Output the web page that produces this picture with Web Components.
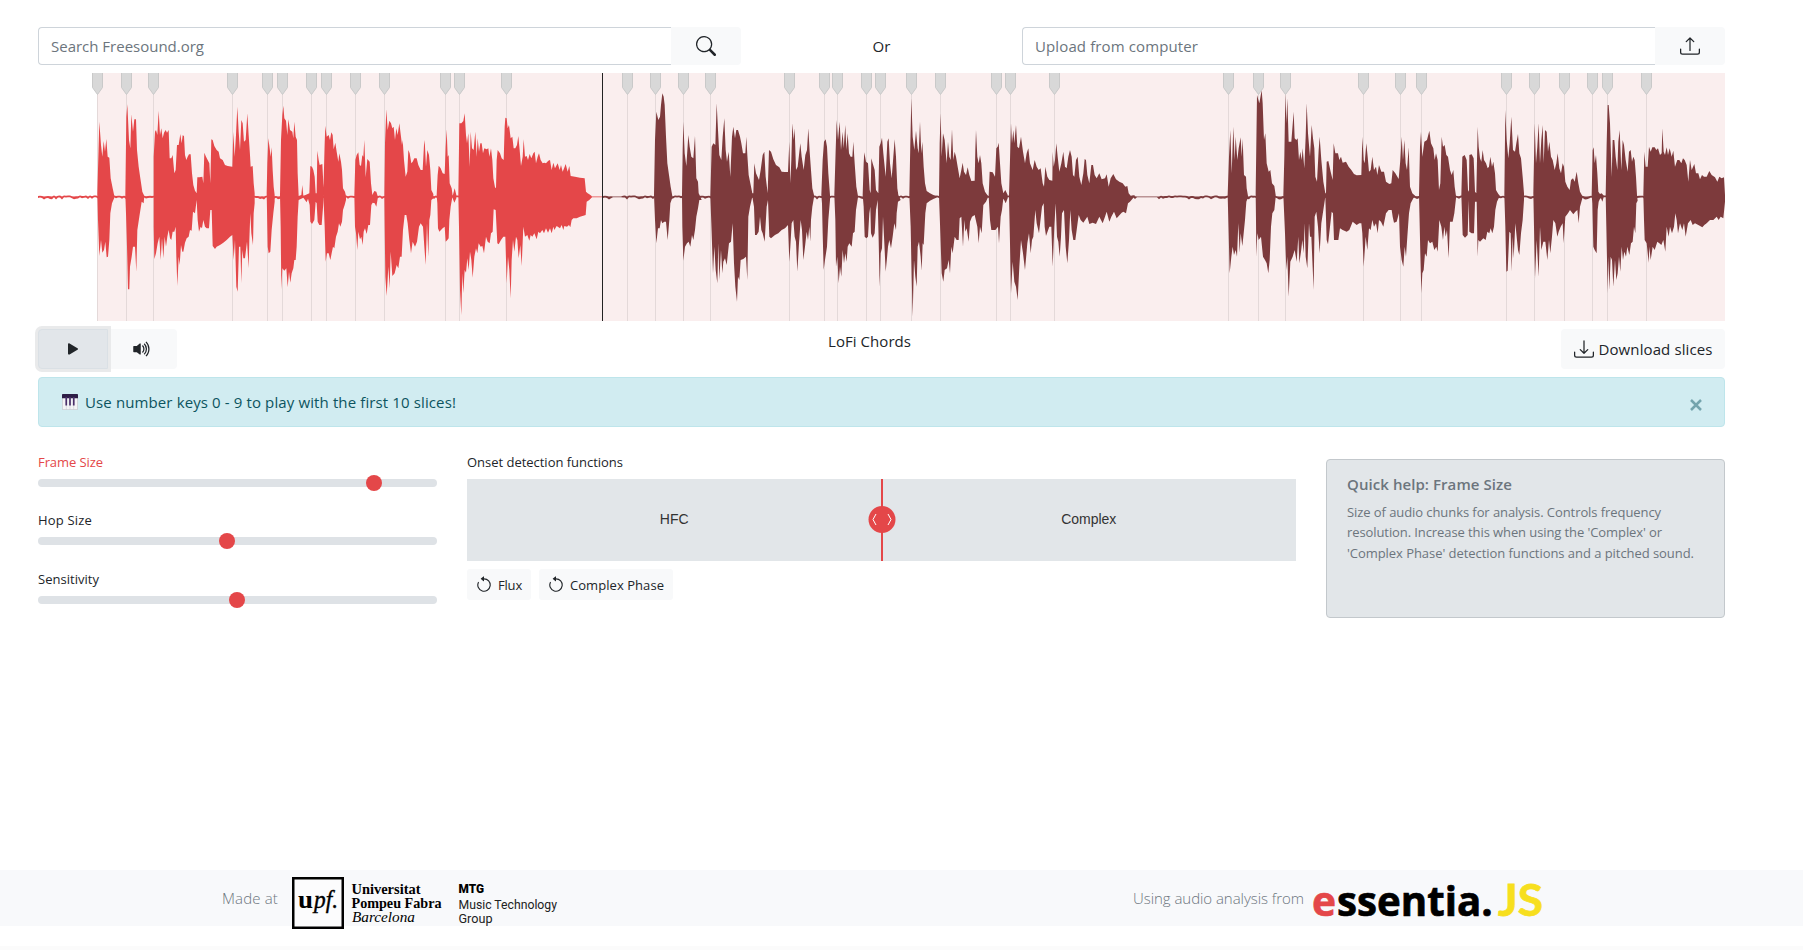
<!DOCTYPE html>
<html lang="en">
<head>
<meta charset="utf-8">
<title>LoFi Chords</title>
<style>
html,body{margin:0;height:100%;background:#fff;overflow:hidden}
body{font:15px/24px "Open Sans","Noto Sans",sans-serif;color:#212529}
</style>
</head>
<body>
<slicer-app></slicer-app>
<script>
const define = (name, html, setup) => customElements.define(name, class extends HTMLElement {
  connectedCallback() {
    if (this.shadowRoot) return;
    const root = this.attachShadow({mode: 'open'});
    const t = document.createElement('template');
    t.innerHTML = typeof html === 'function' ? html(this) : html;
    root.append(t.content.cloneNode(true));
    if (setup) setup(this, root);
  }
});

/* Text run tracked to a given width */
define('fit-text', '<style>:host{display:inline-block;white-space:nowrap}span{display:inline-block}</style><span><slot></slot></span>', (el, root) => {
  const s = root.querySelector('span'), w = +el.getAttribute('w');
  const n = el.textContent.length, nat = s.getBoundingClientRect().width;
  if (w && n) s.style.letterSpacing = ((w - nat) / n).toFixed(3) + 'px';
});

const ICONS = {
  search: '<path d="M11.742 10.344a6.5 6.5 0 1 0-1.397 1.398h-.001c.03.04.062.078.098.115l3.85 3.85a1 1 0 0 0 1.415-1.414l-3.85-3.85a1.007 1.007 0 0 0-.115-.1zM12 6.5a5.5 5.5 0 1 1-11 0 5.5 5.5 0 0 1 11 0z"/>',
  upload: '<path d="M.5 9.9a.5.5 0 0 1 .5.5v2.5a1 1 0 0 0 1 1h12a1 1 0 0 0 1-1v-2.5a.5.5 0 0 1 1 0v2.5a2 2 0 0 1-2 2H2a2 2 0 0 1-2-2v-2.5a.5.5 0 0 1 .5-.5z"/><path d="M7.646 1.146a.5.5 0 0 1 .708 0l3 3a.5.5 0 0 1-.708.708L8.5 2.707V11.5a.5.5 0 0 1-1 0V2.707L5.354 4.854a.5.5 0 1 1-.708-.708l3-3z"/>',
  download: '<path d="M.5 9.9a.5.5 0 0 1 .5.5v2.5a1 1 0 0 0 1 1h12a1 1 0 0 0 1-1v-2.5a.5.5 0 0 1 1 0v2.5a2 2 0 0 1-2 2H2a2 2 0 0 1-2-2v-2.5a.5.5 0 0 1 .5-.5z"/><path d="M7.646 11.854a.5.5 0 0 0 .708 0l3-3a.5.5 0 0 0-.708-.708L8.5 10.293V1.5a.5.5 0 0 0-1 0v8.793L5.354 8.146a.5.5 0 1 0-.708.708l3 3z"/>',
  play: '<path d="M11.596 8.697l-6.363 3.692c-.54.313-1.233-.066-1.233-.697V4.308c0-.63.692-1.01 1.233-.696l6.363 3.692a.802.802 0 0 1 0 1.393z"/>',
  volume: '<path d="M11.536 14.01A8.473 8.473 0 0 0 14.026 8a8.473 8.473 0 0 0-2.49-6.01l-.708.707A7.476 7.476 0 0 1 13.025 8c0 2.071-.84 3.946-2.197 5.303l.708.707z"/><path d="M10.121 12.596A6.48 6.48 0 0 0 12.025 8a6.48 6.48 0 0 0-1.904-4.596l-.707.707A5.483 5.483 0 0 1 11.025 8a5.483 5.483 0 0 1-1.61 3.89l.706.706z"/><path d="M8.707 11.182A4.486 4.486 0 0 0 10.025 8a4.486 4.486 0 0 0-1.318-3.182L8 5.525A3.489 3.489 0 0 1 9.025 8 3.49 3.49 0 0 1 8 10.475l.707.707zM6.717 3.55A.5.5 0 0 1 7 4v8a.5.5 0 0 1-.812.39L3.825 10.5H1.5A.5.5 0 0 1 1 10V6a.5.5 0 0 1 .5-.5h2.325l2.363-1.89a.5.5 0 0 1 .529-.06z"/>',
  reset: '<path fill-rule="evenodd" d="M8 3a5 5 0 1 1-4.546 2.914.5.5 0 0 0-.908-.417A6 6 0 1 0 8 2v1z"/><path d="M8 4.466V.534a.25.25 0 0 0-.41-.192L5.23 2.308a.25.25 0 0 0 0 .384l2.36 1.966A.25.25 0 0 0 8 4.466z"/>',
  piano: '<rect x="0" y="0" width="16" height="16" rx=".8" fill="#c9ccd2"/><path d="M.8 4h3.100v11.200H.8zM4.500 4h3.200v11.200H4.500zM8.300 4h3.200v11.200H8.300zM12.100 4h3.100v11.200H12.100z" fill="#f3f3f5"/><path d="M0 .8Q0 0 .8 0h14.400q.8 0 .8.8V4.200H0z" fill="#2d1d46"/><path d="M3.400 3h1.700v8.500H3.400zM7.150 3h1.700v8.500H7.150zM10.900 3h1.700v8.500H10.900z" fill="#4a2f6a"/>'
};
define('bi-icon', el => `<style>:host{display:inline-flex;flex:none}svg{display:block}</style>
<svg width="${el.getAttribute('size')}" height="${el.getAttribute('size')}" viewBox="0 0 16 16" fill="currentColor">${ICONS[el.getAttribute('name')]}</svg>`);

define('input-group', `<style>
:host{display:flex;height:38px;flex:none}
.f{flex:1;box-sizing:border-box;border:1px solid #ced4da;border-right:0;border-radius:4px 0 0 4px;color:#6c757d;padding:6px 12px;line-height:26px;display:flex;align-items:center}
.b{width:70px;background:#f8f9fa;border-radius:0 4px 4px 0;display:flex;align-items:center;justify-content:center}
</style><div class="f"><slot></slot></div><div class="b"><slot name="icon"></slot></div>`);

/* Envelopes: origin x, then "upper outline / lower outline" per sound, three units to a pixel */
const WAVE = [
[30,'#e44749',[
'202,400 205,290 208,185 213,255 217,290 221,243 225,275 229,237 233,290 238,293 242,355 248,385 253,408/253,413 246,430 241,460 238,540 234,590 230,592 226,545 222,570 217,578 213,540 208,588 204,480',
'286,405 289,170 292,133 297,240 301,265 304,163 309,215 313,178 318,178 321,270 326,320 331,355 337,395 343,408/341,430 335,425 328,470 322,510 319,635 315,560 309,560 305,590 300,620 298,688 294,688 291,560 288,460',
'371,290 375,215 378,210 382,225 386,152 390,225 394,205 398,235 402,218 407,210 411,218 416,210 419,295 424,295 428,285 433,340 437,330 441,255 446,255 451,222 455,250 458,226 462,228 465,285 469,300 473,290 477,283 482,283 486,340 490,375 495,392 500,400 502,352 508,352 517,350 520,370 523,278 528,290 533,300 538,310 541,370 544,238 548,240 553,258 560,270 566,275 570,295 578,300 585,315 593,318 607,320 610,215 614,290 618,225 622,140 626,215 630,270 634,180 638,190 642,245 647,240 652,160 656,225 660,285 662,320 668,318 671,370 674,400/674,430 671,460 669,555 664,520 661,460 658,540 656,625 651,545 645,595 640,595 637,570 634,670 631,560 627,560 623,695 619,680 615,540 611,600 607,525 600,530 590,540 580,548 570,555 560,560 555,567 548,558 545,450 541,450 537,505 530,505 525,500 520,480 516,505 512,500 507,515 503,480 500,420 495,460 489,455 485,512 480,510 476,530 470,535 465,548 460,575 457,575 453,555 449,615 446,590 442,678 439,590 437,500 433,515 428,515 424,540 420,535 416,510 412,530 408,560 404,530 400,595 396,535 392,600 388,530 383,550 378,580 373,597 371,500',
'710,400 712,310 715,235 719,265 722,290 725,262 728,330 731,380 734,405/734,425 730,460 725,510 721,575 716,580 713,560 711,450',
'750,405 753,240 757,165 760,137 763,175 768,182 772,225 775,178 780,210 787,215 790,235 793,185 797,230 801,240 803,340 806,408 814,405 817,375 820,408 838,400 841,318 846,320 850,330 854,350 857,400 860,400 862,272 866,300 869,315 877,312 880,370 883,390/880,430 875,495 868,495 863,485 860,430 857,425 853,480 846,492 841,485 839,435 834,416 830,427 820,413 806,420 803,470 800,560 797,600 793,600 790,625 785,640 781,668 777,635 773,682 769,625 763,632 757,625 754,688 752,500']],
[320,'#e44749',[
'10,400 14,250 16,197 20,230 26,225 30,240 34,217 38,225 41,268 46,248 50,275 55,305 58,280 63,305 66,330 69,385 75,395 78,408/78,420 74,435 69,450 66,485 61,500 57,490 53,515 48,530 43,565 39,560 35,580 31,600 26,580 21,580 17,605 14,500',
'103,405 106,300 110,285 115,277 119,315 123,318 127,285 130,290 133,240 137,352 142,297 149,305 153,370 157,405 163,393 169,395 172,405/174,410 169,440 164,430 158,428 154,435 150,495 145,495 140,522 135,505 131,515 128,555 124,530 120,538 115,515 112,570 108,520 105,500',
'193,410 195,250 199,148 203,210 208,182 213,190 217,205 221,200 225,240 229,205 233,225 238,190 243,230 246,255 248,240 252,300 257,350 262,335 265,270 269,280 274,310 278,305 283,295 290,295 295,315 302,330 308,330 312,255 314,240 318,320 322,270 327,285 331,330 334,390 340,402/340,415 334,420 331,465 328,480 325,590 321,490 317,615 313,560 309,500 302,490 297,500 291,545 285,560 278,545 273,580 268,540 263,490 259,465 254,465 249,510 245,590 240,590 235,625 230,615 224,640 217,648 212,575 209,685 205,620 200,708 196,650 194,500',
'350,405 353,345 356,317 362,325 368,340 374,342 377,260 380,208 383,290 386,285 389,370 395,385 398,408 404,385 409,405/409,415 403,428 397,412 392,440 388,480 386,535 382,540 377,545 374,500 368,505 358,515 354,505 352,430',
'415,405 418,190 424,190 430,183 434,160 438,225 441,250 445,220 449,320 452,215 456,265 461,270 466,215 470,290 473,235 477,275 481,250 485,250 489,280 493,265 500,268 505,265 508,290 513,265 517,300 520,355 525,382 528,385 530,300 533,270 540,280 545,295 551,300 554,200 556,173 560,175 563,205 567,195 572,235 577,230 581,265 586,265 591,255 595,228 599,270 603,318 608,290 611,238 615,290 620,288 624,300 629,282 634,295 640,280 644,275 648,310 653,290 657,280 662,300 668,310 673,308 678,310 685,302 690,300 695,330 700,308 705,325 713,310 719,330 723,315 728,335 734,320 737,312 743,335 748,318 752,348 765,350 780,353 794,355 798,395 803,400 808,403 815,408/815,412 808,420 800,425 797,465 790,467 780,470 770,475 760,475 755,480 751,502 747,495 741,500 733,498 730,510 725,495 720,505 710,498 703,510 700,500 695,520 690,505 684,518 678,505 672,520 667,510 660,520 655,515 650,538 643,520 637,530 632,525 628,542 622,525 615,530 610,500 605,618 601,555 596,595 592,540 588,530 583,575 579,540 575,600 572,715 568,630 564,590 560,670 556,530 550,530 543,540 536,553 532,550 527,450 521,448 518,515 513,520 509,550 503,545 498,530 492,580 487,558 482,560 476,550 472,580 468,565 463,590 458,653 454,600 450,575 446,630 442,595 438,638 434,630 430,700 427,640 424,765 420,690 417,500']],
[610,'#7d3a3c',[
'132,405 135,240 139,155 145,180 150,170 153,135 157,100 161,110 164,135 168,230 172,310 177,345 182,380 187,408/187,413 181,430 178,480 173,540 168,485 163,485 157,490 153,480 149,505 144,505 139,550 135,480',
'216,405 218,270 220,185 224,280 229,318 235,225 239,260 244,290 250,295 255,228 259,355 264,365 266,400 270,408/275,420 268,420 264,445 259,470 255,510 250,540 246,525 241,560 236,545 231,550 225,560 220,602 217,500',
'301,408 305,260 310,250 316,255 320,130 324,210 328,285 334,300 338,230 343,175 347,270 351,305 356,275 361,350 366,230 370,200 375,235 379,210 384,210 390,230 394,250 399,280 406,280 409,230 412,285 416,345 421,370 427,400 430,400 433,310 438,340 447,360 452,330 458,285 463,275 467,350 473,400 477,270 483,275 490,298 498,315 508,322 515,335 525,336 534,336 538,245 541,370 544,300 547,190 551,240 554,205 558,330 563,320 571,250 575,290 581,330 586,285 591,270 595,205 599,275 603,330 607,385 612,405/612,412 607,440 603,480 601,545 598,500 594,540 590,515 585,560 580,600 576,510 572,480 567,550 562,635 558,545 554,530 550,480 545,490 541,560 538,605 534,495 525,505 515,510 505,520 495,525 483,535 478,530 474,420 470,440 464,545 458,520 454,510 450,470 446,515 440,525 435,525 432,440 427,410 420,440 415,470 412,660 408,590 400,597 392,600 388,660 384,650 381,725 376,680 372,610 368,490 363,545 357,550 350,615 345,595 340,605 337,640 333,570 328,660 325,550 322,670 317,630 313,560 309,640 305,520',
'634,405 638,300 642,245 647,238 651,260 655,340 660,405/660,420 655,480 651,560 645,600 641,630 638,520 636,430',
'673,405 677,270 680,180 684,240 689,185 693,270 698,215 701,265 706,195 709,270 713,220 717,280 722,290 727,290 730,245 734,310 739,380 744,408/744,412 738,450 734,515 729,520 725,560 718,550 713,560 710,605 706,580 702,610 698,570 694,650 690,620 686,670 682,590 678,620 676,480',
'758,405 761,310 763,277 768,305 774,310 779,390 782,400 784,295 788,310 794,330 798,390 805,400 808,260 812,250 816,233 820,280 827,350 832,245 836,235 840,310 845,355 850,290 854,238 858,290 862,385 865,405/872,420 864,425 860,460 858,510 853,490 848,530 843,565 838,540 834,560 831,595 827,635 823,550 819,470 816,565 812,580 809,680 806,540 803,420 798,450 794,520 788,533 783,520 781,440 778,460 774,530 769,535 764,530 761,440']],
[890,'#7d3a3c',[
'58,405 61,250 64,115 68,230 73,270 78,212 83,265 86,280 90,185 94,280 97,245 101,320 105,370 110,393 120,400 130,405 140,408/140,412 120,422 110,430 106,460 101,555 98,550 95,632 92,590 87,545 83,560 80,680 76,650 72,600 68,770 65,650 62,500',
'147,408 149,250 152,160 155,290 159,220 164,240 170,310 174,245 178,290 182,300 186,208 190,300 194,275 198,290 203,320 209,355 214,330 218,308 222,335 228,345 233,322 238,345 244,363 254,362 256,270 258,210 262,290 266,310 270,285 274,310 278,370 285,395 294,408/294,412 288,425 280,435 275,520 270,500 266,550 262,500 254,465 246,470 240,485 236,545 230,505 226,515 223,480 219,560 214,470 209,475 206,540 200,540 194,530 188,580 184,560 180,640 176,600 171,625 164,630 160,665 155,640 151,520',
'296,408 299,335 308,337 315,350 319,265 323,260 326,248 330,310 334,370 340,400 346,390 353,405/353,415 347,430 340,415 336,450 332,470 327,550 324,500 316,510 304,510 300,480',
'357,408 360,300 363,190 366,250 370,210 373,250 378,195 382,260 387,265 393,230 399,275 405,310 410,280 415,265 420,310 428,330 434,300 440,320 446,330 452,325 458,370 462,380 466,320 472,350 478,360 487,362 488,275 491,320 495,300 499,250 503,290 508,335 514,310 520,275 525,320 530,325 535,290 540,270 545,290 549,345 553,350 558,300 563,290 568,350 574,375 580,340 584,297 588,300 592,345 598,370 604,315 609,315 614,345 620,355 628,340 635,358 645,355 650,343 656,380 662,355 670,342 678,358 688,365 698,370 706,380 712,378 716,400 722,407 735,406/730,413 720,425 714,430 708,460 700,455 695,458 680,475 672,455 664,470 658,485 650,455 645,470 638,490 628,470 618,492 608,488 598,492 592,470 580,488 572,480 566,465 560,510 556,540 550,540 545,510 541,450 537,540 532,610 527,560 522,450 516,460 513,530 509,590 505,545 501,530 497,430 493,500 488,620 484,500 478,500 468,528 464,500 461,430 456,440 447,520 440,490 436,450 430,530 426,540 422,580 417,520 412,550 405,630 399,580 393,540 388,620 383,720 378,680 373,665 368,605 363,700 360,550']],
[1180,'#7d3a3c',[
'143,405 147,290 151,210 155,340 160,200 164,300 167,230 172,300 176,265 182,232 185,290 188,237 192,345 198,350 200,385 204,408/204,412 199,425 195,480 190,530 187,558 182,520 179,578 175,490 171,590 167,570 162,585 158,560 154,590 149,640 146,520',
'227,400 231,105 238,130 245,90 248,130 252,240 256,220 260,310 266,335 271,330 276,370 283,378 287,405/287,412 283,450 277,460 273,500 269,600 265,640 260,610 255,600 249,590 243,530 236,540 232,520 229,590 228,480',
'310,405 313,290 316,100 319,190 322,115 326,245 334,245 341,155 344,235 349,240 353,235 357,300 361,275 365,300 368,265 373,325 377,230 380,130 384,220 390,290 395,195 399,235 403,265 406,350 411,365 416,270 419,230 424,300 430,365 436,400 438,400 440,305 445,303 452,335 458,360 461,250 466,280 474,280 478,300 483,290 488,308 498,305 506,320 514,330 522,342 530,346 544,345 547,230 551,300 554,310 559,250 563,290 567,335 572,330 577,290 582,330 588,320 592,345 597,315 604,335 612,335 618,365 628,372 634,370 638,330 646,340 656,357 661,300 665,230 669,300 673,240 677,310 681,330 686,262 690,380 697,400 706,408/700,415 692,430 687,460 682,530 678,590 674,560 670,620 665,600 660,560 657,460 650,485 642,488 638,470 635,450 626,450 618,460 610,500 603,485 597,480 593,520 588,490 582,500 577,480 572,510 567,505 562,570 557,530 551,620 547,520 544,490 538,490 530,495 518,485 508,510 500,515 488,510 480,505 475,540 462,540 459,460 455,455 450,500 444,553 440,540 436,410 430,450 424,490 419,580 414,500 409,455 404,470 401,690 397,600 394,530 390,530 387,490 382,625 377,590 374,490 371,580 367,540 363,575 358,610 355,530 350,605 344,570 338,590 331,605 326,710 322,590 319,630 315,520',
'717,405 720,260 723,215 727,290 733,245 741,240 748,212 753,250 760,265 764,300 768,280 773,300 777,390 781,370 785,230 789,260 794,255 799,285 804,290 810,330 815,345 820,330 824,380 828,408/828,415 823,460 818,485 810,485 806,595 801,510 797,530 793,500 789,540 784,500 778,480 773,575 769,560 763,570 757,545 750,550 744,540 740,590 735,580 731,630 727,640 724,700 721,580']],
[1450,'#7d3a3c',[
'34,405 37,290 44,285 50,300 54,390 57,395 58,285 65,283 71,295 75,395 79,400 81,300 83,200 86,260 90,295 94,305 98,270 102,300 108,310 113,325 117,320 121,290 126,320 130,305 135,340 138,390 145,402 150,408/146,415 141,425 136,450 132,500 127,520 122,505 118,520 112,515 107,540 100,535 90,545 85,540 83,590 80,425 75,425 72,520 65,520 58,515 56,420 53,525 45,533 38,525',
'163,405 166,150 170,240 175,295 179,250 184,170 189,270 195,275 199,250 204,222 208,280 213,295 218,350 222,400/222,420 218,480 213,520 208,585 204,570 200,530 196,490 191,595 188,530 185,635 182,520 178,515 173,632 169,635 166,500',
'250,400 254,190 258,310 262,260 266,190 270,310 274,240 278,195 281,310 285,210 290,215 294,275 298,245 303,290 308,300 314,330 319,310 323,280 328,325 333,340 338,310 342,320 346,365 352,380 359,390 363,360 369,355 374,365 380,335 385,370 390,395 397,408/397,415 390,440 386,490 382,450 376,455 370,463 360,450 354,460 346,470 341,550 338,490 332,500 326,515 322,530 316,490 310,480 306,530 301,580 297,540 292,600 286,545 280,545 274,570 270,500 266,650 260,540 255,655 252,500',
'425,405 428,270 431,262 434,310 438,285 442,340 445,395 450,402 455,400 462,408/457,425 452,412 446,425 443,450 440,580 434,570 430,560 427,430',
'467,405 470,250 473,135 476,135 480,190 485,350 488,240 493,240 497,290 502,330 505,245 509,210 514,330 518,240 522,255 527,300 533,335 537,275 542,270 546,305 550,290 554,300 558,350 561,405/563,422 559,430 556,520 552,500 548,545 543,550 538,585 532,560 528,590 523,575 519,600 515,560 511,635 507,590 503,640 499,660 495,600 490,680 486,600 482,590 478,690 475,590 473,700 469,500',
'580,405 583,275 587,320 593,320 597,260 602,275 607,262 614,262 619,270 624,265 630,285 635,280 637,205 641,275 645,285 650,262 654,285 659,265 665,290 670,272 675,320 682,300 688,300 694,310 699,295 704,300 710,315 715,365 720,300 725,330 733,312 738,340 745,340 750,358 756,345 762,350 770,350 778,333 785,345 795,352 802,365 808,350 815,355 822,352 825,405/825,425 820,475 812,470 806,480 800,470 790,480 780,480 770,490 763,495 757,502 745,495 735,490 728,495 722,480 714,490 707,530 702,490 697,510 690,490 684,520 680,480 676,460 672,500 666,520 660,500 656,530 650,500 646,575 640,540 634,555 628,550 622,545 614,570 608,560 602,600 598,560 596,608 590,550 584,540 582,480']]
];
const ONSETS = [97,126,153,232,267,282,311,326,355,384,445,459,506,627,655,683,710,789,824,837,866,880,911,940,996,1010,1054,1228,1258,1285,1363,1400,1421,1506,1534,1564,1592,1607,1646];
define('wave-form', () => {
  const lines = ONSETS.map(x => `<rect x="${x - 38}" y="20" width="1" height="228" fill="#e4d9d9"/>`).join('');
  const flags = ONSETS.map(x => `<path transform="translate(${x - 43},0)" d="M.5-1h10v15.500L5.500 21.500.500 14.500z" fill="#d8d8d8" stroke="#c9c9c9"/>`).join('');
  const shapes = WAVE.map(([ox, c, list]) => `<g transform="translate(${ox - 38},-13) scale(.33333)" fill="${c}">` +
    list.map(s => `<path d="M${s.replace('/', ' ')}z"/>`).join('') + '</g>').join('');
  const noise = (a, b, calm) => {
    let seed = 7, up = '', lo = '';
    for (let x = a; x <= b; x += 2) {
      seed = (seed * 1103515245 + 12345) % 2147483648;
      const r = seed / 2147483648, quiet = calm.some(([s, e]) => x > s && x < e), k = quiet ? 0 : r * r;
      up += `${x},${(123.5 - (quiet ? 0 : (1 - r) * 1.1)).toFixed(2)} `;
      lo = `${x},${(124.3 + k * 2.2).toFixed(2)} ` + lo;
    }
    return 'M' + up + lo + 'z';
  };
  return `<style>:host{display:block;height:248px;overflow:hidden}svg{display:block}</style>
  <svg width="1687" height="248" viewBox="0 0 1687 248">
  <rect x="59" width="1628" height="248" fill="#faeeee"/>${lines}
  <path d="${noise(0, 564, [[552, 565]])}" fill="#e44749"/><path d="${noise(565, 1686, [[573, 584], [1098, 1120]])}" fill="#7d3a3c"/>
  ${shapes}${flags}<rect x="564" width="1" height="248" fill="#222"/></svg>`;
});

define('play-controls', `<style>
:host{display:flex;justify-content:space-between;height:40px;margin-top:8px}
.g{display:flex;width:139px}
.p,.v,.d{display:flex;align-items:center;justify-content:center;background:#f8f9fa}
.p{box-sizing:border-box;width:70px;background:#e2e6ea;border:1px solid #dae0e5;border-radius:4px 0 0 4px;box-shadow:0 0 0 3px #e9eaeb;clip-path:inset(-3px -3px -3px -3px)}
.v{flex:1;border-radius:0 4px 4px 0;padding-right:2px}
.t{margin-right:25px}
.d{width:164px;border-radius:4px;gap:5px}
.l,.r{flex:1;display:flex}.l{flex:0 0 790px}.r{justify-content:flex-end}.t{margin-right:0}
</style><div class="l"><div class="g"><div class="p"><bi-icon name="play" size="20"></bi-icon></div><div class="v"><bi-icon name="volume" size="20"></bi-icon></div></div></div>
<div class="t"><fit-text w="83">LoFi Chords</fit-text></div>
<div class="r"><div class="d"><bi-icon name="download" size="20"></bi-icon><fit-text w="114">Download slices</fit-text></div></div>`);

define('info-alert', `<style>
:host{display:flex;align-items:center;box-sizing:border-box;height:50px;margin-top:8px;padding:0 21px 0 23px;background:#d1ecf1;border:1px solid #bee5eb;border-radius:4px;color:#0c5460}
bi-icon{margin-right:7px}.m{flex:1}
</style><bi-icon name="piano" size="16"></bi-icon><div class="m"><slot></slot></div>
<svg width="14" height="14" viewBox="0 0 14 14" style="margin-top:6px"><path d="M2 2l10 10M12 2L2 12" stroke="#74a4ad" stroke-width="2.500"/></svg>`);

define('range-slider', el => `<style>
:host{display:block;height:58px}
:host(:last-child){margin-top:1px}
.l{font-size:13px;line-height:21px;height:27px}
.k{position:relative;height:8px;border-radius:4px;background:#dee2e6}
.k i{position:absolute;top:-4px;left:${el.getAttribute('at')}px;width:16px;height:16px;border-radius:50%;background:#e44749}
</style><div class="l"><slot></slot></div><div class="k"><i></i></div>`);

define('function-mixer', `<style>
:host{display:block;font-size:13px}
.l{line-height:21px;height:27px}
.pad{position:relative;display:grid;grid-template-columns:1fr 1fr;height:82px;background:#e2e6e9;font:14px/80px "Liberation Sans",Arial,sans-serif;text-align:center;color:#333}
.bar{position:absolute;left:414px;top:0;width:2px;height:82px;background:#e44749}
.knob{position:absolute;left:401px;top:27px}
.btns{display:flex;gap:8px;margin-top:8px}
.btns span{display:flex;align-items:center;height:31px;box-sizing:border-box;background:#f8f9fa;border-radius:3px;padding:0 9px 0 8px;gap:5px}
</style><div class="l"><fit-text w="156">Onset detection functions</fit-text></div>
<div class="pad"><div>HFC</div><div>Complex</div><div class="bar"></div>
<svg class="knob" width="28" height="27" viewBox="0 0 28 27"><circle cx="14" cy="13.500" r="13.500" fill="#e44749"/><path d="M8 8L5 13.500 8 19M20 8l3 5.500L20 19" fill="none" stroke="#fff" stroke-width="1"/></svg></div>
<div class="btns"><span><bi-icon name="reset" size="18"></bi-icon><fit-text w="24">Flux</fit-text></span><span><bi-icon name="reset" size="18"></bi-icon><fit-text w="94">Complex Phase</fit-text></span></div>`);

define('quick-help', `<style>
:host{display:block;box-sizing:border-box;height:159px;border:1px solid #c3c8cc;border-radius:4px;background:#e2e6e9;color:#6c757d;padding:12px 20px;font-size:13px;line-height:20.600px}
h5{margin:0 0 5.500px;font-size:15px;font-weight:600;line-height:24px}div{height:20.600px}
</style><h5><fit-text w="165">Quick help: Frame Size</fit-text></h5>
<div><fit-text w="314">Size of audio chunks for analysis. Controls frequency</fit-text></div>
<div><fit-text w="315">resolution. Increase this when using the 'Complex' or</fit-text></div>
<div><fit-text w="347">'Complex Phase' detection functions and a pitched sound.</fit-text></div>`);

define('page-footer', `<style>
:host{display:flex;height:56px;background:#f8f9fb;color:#6c757d;font-weight:300}
.a,.b{display:flex;align-items:center}.a{padding-left:222px;width:911px}.a svg{margin-left:13px}.b svg{margin-left:8px}
svg{display:block;overflow:visible;flex:none}fit-text{margin-top:0}
</style><div class="a"><fit-text w="56">Made at</fit-text>
<svg width="280" height="56" viewBox="291 870 280 56" fill="#000">
<rect x="293.250" y="878.250" width="49.500" height="49.500" fill="#fff" fill-opacity=".5" stroke="#000" stroke-width="2.500"/>
<g font-family="Liberation Serif" font-size="26"><text x="298" y="907.500" font-weight="700" textLength="15" lengthAdjust="spacingAndGlyphs">u</text><text x="314" y="907.500" font-style="italic" stroke="#000" stroke-width=".4" textLength="24" lengthAdjust="spacingAndGlyphs">pf.</text></g>
<g font-family="Liberation Serif" font-size="14.500" font-weight="700"><text x="351.500" y="893.700" textLength="69" lengthAdjust="spacingAndGlyphs">Universitat</text><text x="351.500" y="908" textLength="90" lengthAdjust="spacingAndGlyphs">Pompeu Fabra</text><text x="352" y="922.300" font-weight="400" font-style="italic" textLength="63" lengthAdjust="spacingAndGlyphs">Barcelona</text></g>
<g font-family="Roboto" font-size="13" font-weight="400" fill="#222"><text x="458.500" y="893" font-weight="900" fill="#000" textLength="25.500" lengthAdjust="spacingAndGlyphs">MTG</text><text x="458.500" y="909" textLength="98.500" lengthAdjust="spacingAndGlyphs">Music Technology</text><text x="458.500" y="922.500" textLength="34" lengthAdjust="spacingAndGlyphs">Group</text></g>
</svg></div>
<div class="b"><fit-text w="171">Using audio analysis from</fit-text>
<svg width="232" height="56" viewBox="1312 870 232 56"><g font-family="Open Sans" font-size="41.500" font-weight="700" stroke-width=".7"><text transform="translate(1312 916) scale(.98 1)" fill="#e44749" stroke="#e44749">e</text><text transform="translate(1337 916) scale(.97 1)" fill="#000" stroke="#000">ssentia.</text></g><text x="1498" y="916" font-family="Lato" font-weight="700" font-size="44.500" fill="#f7df1e" stroke="#f7df1e" stroke-width=".8" textLength="45" lengthAdjust="spacingAndGlyphs">JS</text></svg></div>`);

define('slicer-app', `<style>
:host{display:flex;flex-direction:column;height:950px;box-sizing:border-box}
main{flex:none;height:870px;box-sizing:border-box;padding:27px 78px 0 38px}
.top{display:flex;justify-content:space-between;align-items:center;margin-bottom:8px}
.top input-group{width:703px}
.cols{display:grid;grid-template-columns:399px 829px 399px;column-gap:30px;padding-top:25px}
quick-help{margin-top:7px}
.on{color:#e44749}
.end{height:4px;background:#fbfbfb;margin-top:auto}
</style><main>
<div class="top"><input-group><fit-text w="153">Search Freesound.org</fit-text><bi-icon slot="icon" name="search" size="20"></bi-icon></input-group><fit-text w="18">Or</fit-text><input-group><fit-text w="163">Upload from computer</fit-text><bi-icon slot="icon" name="upload" size="20"></bi-icon></input-group></div>
<wave-form></wave-form><play-controls></play-controls>
<info-alert><fit-text w="371">Use number keys 0 - 9 to play with the first 10 slices!</fit-text></info-alert>
<div class="cols"><div><range-slider class="on" at="328"><fit-text w="65">Frame Size</fit-text></range-slider><range-slider at="181"><fit-text w="54">Hop Size</fit-text></range-slider><range-slider at="191"><fit-text w="61">Sensitivity</fit-text></range-slider></div>
<function-mixer></function-mixer><quick-help></quick-help></div>
</main><page-footer></page-footer><div class="end"></div>`);
</script>
</body>
</html>
